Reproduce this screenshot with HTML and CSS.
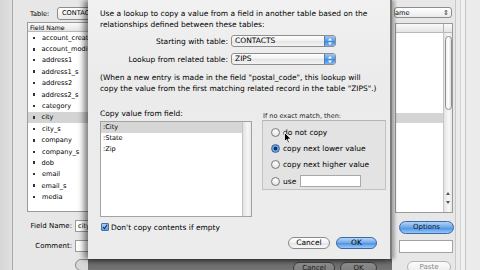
FILE: index.html
```html
<!DOCTYPE html>
<html>
<head>
<meta charset="utf-8">
<link rel="stylesheet" href="styles.css">
</head>
<body>
<div class="screen">
  <div class="bg-left">
    <div class="edge-strip"></div>
    <div class="lpanel">
      <div class="table-row"><span class="tlbl">Table:</span><div class="bgpopup">CONTACTS</div></div>
      <div class="flist">
        <div class="fhead">Field Name</div>
        <div class="frow"><span class="dot"></span>account_created</div>
        <div class="frow"><span class="dot tall"></span>account_modified</div>
        <div class="frow"><span class="dot"></span>address1</div>
        <div class="frow"><span class="dot tall"></span>address1_s</div>
        <div class="frow"><span class="dot"></span>address2</div>
        <div class="frow"><span class="dot tall"></span>address2_s</div>
        <div class="frow"><span class="dot"></span>category</div>
        <div class="frow sel"><span class="dot tall"></span>city</div>
        <div class="frow"><span class="dot"></span>city_s</div>
        <div class="frow"><span class="dot tall"></span>company</div>
        <div class="frow"><span class="dot"></span>company_s</div>
        <div class="frow"><span class="dot tall"></span>dob</div>
        <div class="frow"><span class="dot"></span>email</div>
        <div class="frow"><span class="dot tall"></span>email_s</div>
        <div class="frow"><span class="dot"></span>media</div>
      </div>
      <div class="frm-row"><span class="flbl">Field Name:</span><div class="ffield">city</div></div>
      <div class="frm-row"><span class="flbl">Comment:</span><div class="ffield"></div></div>
      <div class="lbtn"></div>
    </div>
  </div>

  <div class="center">
    <div class="dialog">
      <p class="intro">Use a lookup to copy a value from a field in another table based on the<br>relationships defined between these tables:</p>
      <div class="pop-row">
        <span class="plbl">Starting with table:</span>
        <div class="popup"><span class="ptxt">CONTACTS</span><span class="cap"><svg width="6" height="9" viewBox="0 0 6 9"><path d="M1 3.5 L3 1 L5 3.5Z M1 5.5 L3 8 L5 5.5Z" fill="#fff"/></svg></span></div>
      </div>
      <div class="pop-row second">
        <span class="plbl">Lookup from related table:</span>
        <div class="popup"><span class="ptxt">ZIPS</span><span class="cap"><svg width="6" height="9" viewBox="0 0 6 9"><path d="M1 3.5 L3 1 L5 3.5Z M1 5.5 L3 8 L5 5.5Z" fill="#fff"/></svg></span></div>
      </div>
      <p class="note">(When a new entry is made in the field "postal_code", this lookup will<br>copy the value from the first matching related record in the table "ZIPS".)</p>
      <div class="lower">
        <div class="lcol">
          <div class="llbl">Copy value from field:</div>
          <div class="vlist">
            <div class="vrows">
              <div class="vrow sel">:City</div>
              <div class="vrow">:State</div>
              <div class="vrow">:Zip</div>
            </div>
            <div class="vscroll"></div>
          </div>
        </div>
        <div class="rcol">
          <div class="glbl">If no exact match, then:</div>
          <div class="gbox">
            <div class="opt"><span class="radio"></span>do not copy</div>
            <div class="opt"><span class="radio on"></span>copy next lower value</div>
            <div class="opt"><span class="radio"></span>copy next higher value</div>
            <div class="opt"><span class="radio"></span>use<span class="usefield"></span></div>
          </div>
        </div>
      </div>
      <div class="chk-row"><span class="chk"><svg width="8" height="8" viewBox="0 0 8 8"><path d="M1.5 4 L3.3 6.3 L7 0.8" stroke="#1a2a55" stroke-width="1.4" fill="none"/></svg></span>Don't copy contents if empty</div>
      <div class="btn-row">
        <div class="btn">Cancel</div>
        <div class="btn blue">OK</div>
      </div>
      <svg class="cursor" width="8" height="12" viewBox="0 0 8 12"><path d="M0.5 0.5 L0.5 9.5 L2.6 7.6 L4 11 L5.4 10.4 L4 7.1 L7 7.1 Z" fill="#000" stroke="#fff" stroke-width="0.8"/></svg>
    </div>
    <div class="under">
      <div class="ubtn c">Cancel</div>
      <div class="ubtn o">OK</div>
    </div>
  </div>

  <div class="bg-right">
    <div class="rpanel">
      <div class="rpopup"><span class="rtxt">Name</span><span class="rarr">&#8661;</span></div>
      <div class="rlist">
        <div class="rhead"><span class="rhcol"></span></div>
        <div class="rbody">
          <div class="rrows">
            <div class="rsel"></div>
          </div>
          <div class="rscroll">
            <div class="thumb"></div>
            <div class="arrows">
              <svg width="6" height="16" viewBox="0 0 6 16"><path d="M1 5 L3 2 L5 5Z M1 11 L3 14 L5 11Z" fill="#555"/></svg>
            </div>
          </div>
        </div>
      </div>
      <div class="optbtn">Options</div>
      <div class="rfield"></div>
      <div class="pastebtn">Paste</div>
    </div>
    <div class="redge"><div class="redge-in"></div></div>
  </div>
</div>
</body>
</html>
```

FILE: styles.css
```css
* { box-sizing: border-box; }
html, body { margin: 0; padding: 0; }
body {
  width: 480px;
  height: 270px;
  overflow: hidden;
  font-family: "DejaVu Sans", "Liberation Sans", sans-serif;
  color: #000;
  background: #e6e6e6;
}
.screen {
  display: flex;
  width: 480px;
  height: 270px;
  overflow: hidden;
}

/* ---------- left background window ---------- */
.bg-left {
  display: flex;
  width: 88px;
  flex: none;
}
.edge-strip {
  width: 13px;
  background: linear-gradient(90deg, #d6d6d6, #e0e0e0);
  border-right: 1px solid #a9a9a9;
}
.lpanel {
  width: 75px;
  overflow: hidden;
  background: #e7e7e7;
  font-size: 6.6px;
}
.table-row {
  display: flex;
  align-items: center;
  margin-top: 7px;
  height: 13px;
}
.tlbl {
  margin-left: 17px;
  width: 27px;
  flex: none;
}
.bgpopup {
  flex: none;
  width: 60px;
  height: 13px;
  line-height: 11px;
  padding-left: 4px;
  border: 1px solid #8c8c8c;
  border-radius: 3px;
  background: linear-gradient(#ffffff, #e9e9e9);
}
.flist {
  margin-top: 2px;
  margin-left: 14px;
  width: 70px;
  height: 190px;
  border: 1px solid #9a9a9a;
  background: #fff;
  overflow: hidden;
}
.fhead {
  height: 9px;
  line-height: 9px;
  padding-left: 2px;
  font-size: 6.2px;
  background: linear-gradient(#fafafa, #e4e4e4);
  border-bottom: 1px solid #b9b9b9;
}
.frow {
  display: flex;
  align-items: center;
  height: 11.4px;
  white-space: nowrap;
}
.frow.sel { background: #d4d4d4; }
.dot {
  width: 2px;
  height: 2px;
  background: #333;
  margin-left: 5px;
  margin-right: 7px;
  flex: none;
}
.dot.tall { height: 3px; width: 1.5px; }
.frm-row {
  display: flex;
  align-items: center;
  height: 12px;
  margin-top: 8px;
}
.flbl {
  width: 59px;
  text-align: right;
  flex: none;
  font-size: 7px;
}
.ffield {
  margin-left: 3px;
  flex: none;
  width: 40px;
  height: 12px;
  line-height: 10px;
  padding-left: 2px;
  border: 1px solid #9c9c9c;
  background: #fff;
}
.lbtn {
  margin-top: 7px;
  margin-left: 62px;
  width: 30px;
  height: 12px;
  border: 1px solid #8a8a8a;
  border-radius: 6px;
  background: #d8d8d8;
}

/* ---------- center dialog ---------- */
.center {
  position: relative;
  z-index: 1;
  width: 304px;
  flex: none;
  display: flex;
  flex-direction: column;
}
.dialog {
  position: relative;
  height: 259px;
  flex: none;
  background: linear-gradient(#f1f1f1, #ebebeb 30%, #ececec);
  border-right: 2px solid #7c7c7c;
  box-shadow: -4px 0 6px rgba(0,0,0,0.5), 3px 0 3px rgba(0,0,0,0.25);
  padding: 0 13px 0 12px;
  font-size: 7.5px;
}
.intro {
  margin: 0;
  padding-top: 9px;
  line-height: 10.5px;
  white-space: nowrap;
}
.pop-row {
  display: flex;
  align-items: center;
  margin-top: 5px;
  height: 12px;
}
.pop-row.second { margin-top: 6px; }
.plbl {
  width: 128px;
  text-align: right;
  flex: none;
}
.popup {
  margin-left: 3px;
  width: 105px;
  height: 12px;
  display: flex;
  border: 1px solid #8e8e8e;
  border-radius: 3px;
  background: linear-gradient(#ffffff, #f0f0f0 50%, #e4e4e4 51%, #f4f4f4);
  overflow: hidden;
}
.ptxt {
  flex: 1;
  padding-left: 3px;
  line-height: 10px;
}
.cap {
  width: 11px;
  display: flex;
  align-items: center;
  justify-content: center;
  background: linear-gradient(#9cc6f2, #5b9be4 50%, #3d86dc 51%, #7db6f0);
  border-left: 1px solid #4f7fb8;
}
.note {
  margin: 6.5px 0 0;
  line-height: 11px;
  white-space: nowrap;
}
.lower {
  display: flex;
  margin-top: 15px;
}
.lcol {
  width: 152px;
  flex: none;
}
.llbl {
  line-height: 9px;
  height: 9px;
}
.vlist {
  margin-top: 3.5px;
  height: 96px;
  display: flex;
  border: 1px solid #a2a2a2;
  background: #fff;
}
.vrows { flex: 1; }
.vrow {
  height: 11px;
  line-height: 11px;
  padding-left: 2px;
  font-size: 6.6px;
}
.vrow.sel { background: #d6d6d6; }
.vscroll {
  width: 9px;
  background: linear-gradient(90deg, #e2e2e2, #f6f6f6 60%, #e8e8e8);
  border-left: 1px solid #c4c4c4;
}
.rcol {
  margin-left: 10px;
  width: 124px;
  flex: none;
  padding-top: 3px;
}
.glbl {
  height: 8px;
  line-height: 8px;
  font-size: 6.5px;
  padding-left: 1px;
  color: #222;
}
.gbox {
  height: 70px;
  padding-top: 3.5px;
  background: #e3e3e3;
  border: 1px solid #c2c2c2;
  border-top-color: #b3b3b3;
}
.opt {
  display: flex;
  align-items: center;
  height: 16.3px;
  white-space: nowrap;
}
.radio {
  width: 9px;
  height: 9px;
  margin-left: 8px;
  margin-right: 3px;
  border-radius: 50%;
  border: 1px solid #7a7a7a;
  background: radial-gradient(circle at 50% 30%, #ffffff, #dcdcdc);
  flex: none;
}
.radio.on {
  border-color: #3b6aa6;
  background: radial-gradient(circle, #1c2c4c 0 1.6px, #6fa6e6 2.2px, #3f86da);
}
.usefield {
  margin-left: 4px;
  width: 61px;
  height: 12px;
  background: #fff;
  border: 1px solid #a8a8a8;
}
.chk-row {
  display: flex;
  align-items: center;
  margin-top: 5px;
  height: 10px;
}
.chk {
  width: 8px;
  height: 8px;
  margin-left: 1px;
  margin-right: 2px;
  border: 1px solid #4670a8;
  border-radius: 1px;
  background: linear-gradient(#a9cdf3, #5e9de4);
  display: flex;
  align-items: center;
  justify-content: center;
  flex: none;
}
.chk svg { margin-top: -1px; }
.btn-row {
  display: flex;
  justify-content: flex-end;
  gap: 6px;
  margin-top: 5px;
}
.btn {
  width: 42px;
  height: 12px;
  line-height: 10px;
  text-align: center;
  border: 1px solid #8a8a8a;
  border-radius: 6px;
  background: linear-gradient(#ffffff, #f2f2f2 50%, #e4e4e4 51%, #f8f8f8);
}
.btn.blue {
  width: 41px;
  border-color: #3b6aa6;
  background: linear-gradient(#b7d6f6, #6da8ea 50%, #4a90e2 51%, #9ccaf6);
}
.cursor {
  position: absolute;
  left: 196px;
  top: 132px;
}
.under {
  flex: 1;
  display: flex;
  background: linear-gradient(#4f4f4f, #6e6e6e 40%, #7a7a7a);
  padding-top: 3px;
  font-size: 7px;
}
.ubtn {
  height: 12px;
  border: 1px solid #3e3e3e;
  border-radius: 6px;
  background: linear-gradient(#8e8e8e, #7a7a7a);
  text-align: center;
  line-height: 11px;
  color: #1a1a1a;
}
.ubtn.c { margin-left: 205px; width: 42px; }
.ubtn.o { margin-left: 5px; width: 37px; }

/* ---------- right background window ---------- */
.bg-right {
  flex: none;
  width: 88px;
  display: flex;
  background: #e7e7e7;
}
.rpanel {
  width: 63px;
  flex: none;
  overflow: hidden;
  font-size: 6.6px;
}
.rpopup {
  margin-top: 7px;
  margin-left: 2px;
  width: 58px;
  height: 11px;
  display: flex;
  align-items: center;
  border: 1px solid #8c8c8c;
  border-radius: 3px;
  background: linear-gradient(#ffffff, #ebebeb);
}
.rtxt {
  flex: 1;
  text-indent: -5px;
  overflow: hidden;
  white-space: nowrap;
}
.rarr {
  font-size: 7px;
  width: 8px;
  color: #333;
}
.rlist {
  margin-top: 5px;
  margin-left: 3px;
  width: 58px;
  height: 190px;
  border: 1px solid #9a9a9a;
  background: #fff;
  display: flex;
  flex-direction: column;
}
.rhead {
  height: 9px;
  flex: none;
  display: flex;
  justify-content: flex-end;
  background: linear-gradient(#fafafa, #e4e4e4);
  border-bottom: 1px solid #b9b9b9;
}
.rhcol {
  width: 9px;
  border-left: 1px solid #b0b0b0;
}
.rbody {
  flex: 1;
  display: flex;
}
.rrows {
  flex: 1;
  padding-top: 80px;
}
.rsel {
  height: 9.5px;
  background: #d4d4d4;
}
.rscroll {
  width: 9px;
  border-left: 1px solid #c6c6c6;
  background: linear-gradient(90deg, #e3e3e3, #f8f8f8 60%, #e6e6e6);
  display: flex;
  flex-direction: column;
  align-items: center;
}
.thumb {
  margin-top: 3px;
  width: 7px;
  height: 74px;
  border: 1px solid #8f8f8f;
  border-radius: 4px;
  background: linear-gradient(90deg, #f2f2f2, #ffffff 50%, #dcdcdc);
}
.arrows {
  margin-top: auto;
  margin-bottom: 6px;
  display: flex;
}
.optbtn {
  margin-top: 8px;
  margin-left: 7px;
  width: 55px;
  height: 13px;
  line-height: 11px;
  text-align: center;
  font-size: 7px;
  color: #0d1c3a;
  border: 1px solid #3b6aa6;
  border-radius: 7px;
  background: linear-gradient(#b2d3f5, #6aa6e9 50%, #4a8fe2 51%, #97c6f5);
}
.rfield {
  margin-top: 6px;
  margin-left: 7px;
  width: 54px;
  height: 13px;
  border: 1px solid #a2a2a2;
  background: #fff;
}
.pastebtn {
  margin-top: 8px;
  margin-left: 15px;
  width: 44px;
  height: 12px;
  line-height: 10px;
  text-align: center;
  font-size: 7px;
  color: #8a8a8a;
  border: 1px solid #b4b4b4;
  border-radius: 6px;
  background: linear-gradient(#fbfbfb, #ececec);
}
.redge {
  flex: 1;
  display: flex;
  border-left: 1px solid #c8c8c8;
  background: #ebebeb;
  padding-left: 4px;
}
.redge-in {
  width: 6px;
  border-left: 1px solid #d2d2d2;
  border-right: 1px solid #c4c4c4;
  background: #f1f1f1;
}
```
